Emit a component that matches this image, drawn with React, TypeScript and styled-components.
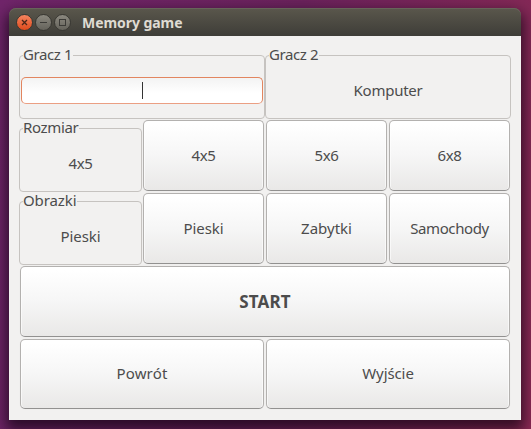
import React from 'react';
import styled, { createGlobalStyle, css } from 'styled-components';

const GlobalStyle = createGlobalStyle`
  * { box-sizing: border-box; }
  html, body { margin: 0; height: 100%; overflow: hidden; }
  body { font-family: "Noto Sans", "Open Sans", sans-serif; font-size: 15px; color: #4c4c4c; }
`;

const Desktop = styled.div`
  width: 531px;
  height: 429px;
  padding: 8px 10px 9px 9px;
  overflow: hidden;
  background: linear-gradient(100deg, #70256a 0%, #6b225c 50%, #8c2a55 100%);
`;

const Window = styled.div`
  display: flex;
  flex-direction: column;
  width: 512px;
  height: 412px;
  border-radius: 7px 7px 0 0;
  box-shadow: 0 7px 14px 3px rgba(12, 0, 14, 0.68);
`;

const TitleBar = styled.div`
  display: flex;
  align-items: center;
  height: 28px;
  padding-left: 7px;
  border-radius: 7px 7px 0 0;
  background: linear-gradient(#5a574c, #3e3d38);
  box-shadow: inset 0 1px 0 #67645a;
`;

const Controls = styled.div`
  display: flex;
  gap: 2px;
`;

const ControlButton = styled.button<{ $close?: boolean }>`
  display: grid;
  place-items: center;
  width: 17px;
  height: 17px;
  padding: 0;
  border: 1px solid #393833;
  border-radius: 50%;
  background: ${(p) =>
    p.$close ? 'linear-gradient(#f4845f, #df4a1c)' : 'linear-gradient(#8b887f, #65635b)'};
`;

const Title = styled.div`
  margin-left: 11px;
  padding-top: 2px;
  font-size: 14px;
  font-weight: 700;
  line-height: 20px;
  letter-spacing: -0.06px;
  color: #dfdbd2;
`;

const Content = styled.div`
  flex: 1;
  display: grid;
  grid-template-columns: repeat(4, 123px);
  grid-template-rows: repeat(4, 73px) 72px;
  padding: 10px;
  background: #f2f1f0;
`;

const Cell = css<{ $span?: number }>`
  grid-column: span ${(p) => p.$span ?? 1};
`;

const Group = styled.fieldset<{ $span?: number }>`
  ${Cell}
  display: flex;
  min-width: 0;
  margin: 0;
  padding: 0 1px;
  border: 1px solid #c6c3c0;
  border-radius: 4px;
`;

const Legend = styled.legend`
  height: 19px;
  margin-left: 2px;
  padding: 0 1px 0 0;
  line-height: 17px;
`;

const GroupBody = styled.div`
  display: flex;
  align-items: center;
  justify-content: center;
  width: 100%;
  height: 53px;
  padding-bottom: 3px;
`;

const NameField = styled.div`
  display: flex;
  align-items: center;
  justify-content: center;
  width: 100%;
  height: 27px;
  border: 1px solid #e2855f;
  border-bottom-color: #eb9f83;
  border-radius: 5px;
  background: linear-gradient(#f3f3f3, #ffffff 60%);
`;

const Caret = styled.span`
  width: 1px;
  height: 17px;
  background: #333;
`;

const Button = styled.button<{ $span?: number; $strong?: boolean }>`
  ${Cell}
  margin: 1px;
  padding: 0 0 ${(p) => (p.$strong ? 0 : 2)}px;
  border: 1px solid #b3b1af;
  border-bottom-color: #929190;
  border-radius: 5px;
  background: linear-gradient(#ffffff 5%, #f6f6f6 50%, #e9e8e7);
  box-shadow: inset 1px 0 0 rgba(255, 255, 255, 0.6), inset -1px 0 0 rgba(255, 255, 255, 0.6),
    0 0 1px rgba(0, 0, 0, 0.08);
  font: inherit;
  font-weight: ${(p) => (p.$strong ? 700 : 400)};
  font-size: ${(p) => (p.$strong ? 17 : 15)}px;
  color: inherit;
`;

const Text = styled.span<{ $track?: number }>`
  letter-spacing: ${(p) => p.$track ?? 0}px;
`;

export default function App() {
  return (
    <>
      <GlobalStyle />
      <Desktop>
        <Window>
          <TitleBar>
            <Controls>
              <ControlButton $close aria-label="Close">
                <svg width="9" height="9" viewBox="0 0 9 9" stroke="#4b2618" strokeWidth="1.3">
                  <path d="M2 2 7 7M7 2 2 7" />
                </svg>
              </ControlButton>
              <ControlButton aria-label="Minimize">
                <svg width="9" height="9" viewBox="0 0 9 9" stroke="#3c3b37">
                  <path d="M1 4.5H8" />
                </svg>
              </ControlButton>
              <ControlButton aria-label="Maximize">
                <svg width="9" height="9" viewBox="0 0 9 9" stroke="#3c3b37" fill="none">
                  <rect x="1.5" y="1.5" width="6" height="6" />
                </svg>
              </ControlButton>
            </Controls>
            <Title>Memory game</Title>
          </TitleBar>
          <Content>
            <Group $span={2}>
              <Legend><Text $track={-0.4}>Gracz 1</Text></Legend>
              <GroupBody>
                <NameField role="textbox" aria-label="Gracz 1">
                  <Caret />
                </NameField>
              </GroupBody>
            </Group>
            <Group $span={2}>
              <Legend><Text $track={-0.4}>Gracz 2</Text></Legend>
              <GroupBody><Text $track={-0.25}>Komputer</Text></GroupBody>
            </Group>
            <Group>
              <Legend><Text $track={-0.35}>Rozmiar</Text></Legend>
              <GroupBody><Text $track={-0.3}>4x5</Text></GroupBody>
            </Group>
            <Button><Text $track={-0.3}>4x5</Text></Button>
            <Button><Text $track={-0.3}>5x6</Text></Button>
            <Button><Text $track={-0.3}>6x8</Text></Button>
            <Group>
              <Legend><Text $track={-0.1}>Obrazki</Text></Legend>
              <GroupBody><Text $track={-0.1}>Pieski</Text></GroupBody>
            </Group>
            <Button><Text $track={-0.1}>Pieski</Text></Button>
            <Button><Text>Zabytki</Text></Button>
            <Button><Text $track={-0.4}>Samochody</Text></Button>
            <Button $span={4} $strong><Text $track={0.2}>START</Text></Button>
            <Button $span={2}><Text $track={0.15}>Powrót</Text></Button>
            <Button $span={2}><Text $track={-0.1}>Wyjście</Text></Button>
          </Content>
        </Window>
      </Desktop>
    </>
  );
}
